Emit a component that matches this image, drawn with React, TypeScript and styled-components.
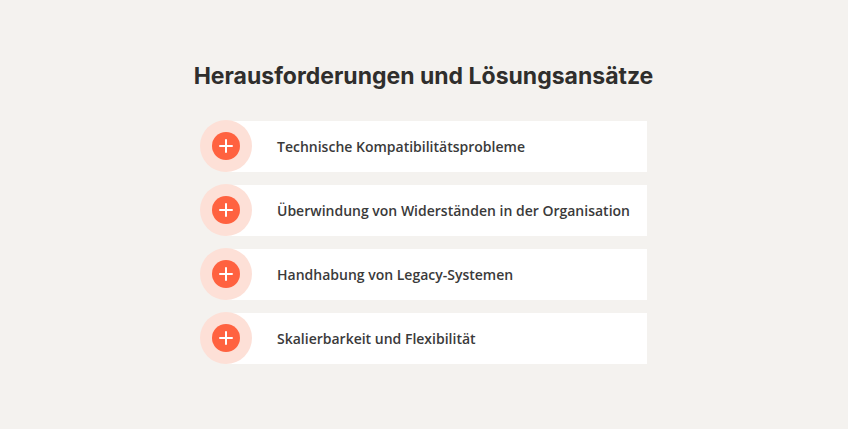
import styled, { createGlobalStyle } from "styled-components";

const GlobalStyle = createGlobalStyle`
	html, body {
		margin: 0;
		padding: 0;
		background: #f4f2ef;
	}
	body {
		font-family: "Open Sans", "Noto Sans", sans-serif;
	}
`;

const challenges = [
	"Technische Kompatibilitätsprobleme",
	"Überwindung von Widerständen in der Organisation",
	"Handhabung von Legacy-Systemen",
	"Skalierbarkeit und Flexibilität",
];

const PlusIcon = () => (
	<svg width="14" height="14" viewBox="0 0 14 14" fill="none">
		<path d="M7 1v12M1 7h12" stroke="#ffffff" strokeWidth="2" strokeLinecap="round" />
	</svg>
);

const App = () => {
	return (
		<Page>
			<GlobalStyle />
			<Section>
				<Title>Herausforderungen und Lösungsansätze</Title>
				<List>
					{challenges.map((text) => (
						<Item key={text}>
							<Badge>
								<Dot>
									<PlusIcon />
								</Dot>
							</Badge>
							<Label>{text}</Label>
						</Item>
					))}
				</List>
			</Section>
		</Page>
	);
};

const Page = styled.div`
	width: 848px;
	height: 429px;
	box-sizing: border-box;
	padding-right: 1px;
	display: flex;
	justify-content: center;
	background: #f4f2ef;
`;

const Section = styled.div`
	width: 447px;
	padding-top: 61px;
	display: flex;
	flex-direction: column;
	align-items: center;
`;

const Title = styled.h2`
	margin: 0 0 29px;
	font-family: "Inter", "Noto Sans", sans-serif;
	font-size: 23px;
	font-weight: 700;
	line-height: 30px;
	color: #2f2e2c;
	white-space: nowrap;
`;

const List = styled.ul`
	width: 100%;
	margin: 0;
	padding: 0;
	list-style: none;
	display: flex;
	flex-direction: column;
	gap: 12px;
`;

const Item = styled.li`
	display: flex;
	align-items: center;
	height: 52px;
`;

const Badge = styled.div`
	position: relative;
	z-index: 1;
	flex: none;
	width: 52px;
	height: 52px;
	border-radius: 50%;
	background: #fde0d7;
	display: flex;
	align-items: center;
	justify-content: center;
`;

const Dot = styled.div`
	width: 28px;
	height: 28px;
	border-radius: 50%;
	background: #ff6240;
	display: flex;
	align-items: center;
	justify-content: center;
`;

const Label = styled.div`
	flex: 1;
	height: 51px;
	margin-left: -26px;
	padding-left: 51px;
	display: flex;
	align-items: center;
	background: #ffffff;
	font-size: 14px;
	font-weight: 600;
	color: #3a3a3a;
`;

export default App;
